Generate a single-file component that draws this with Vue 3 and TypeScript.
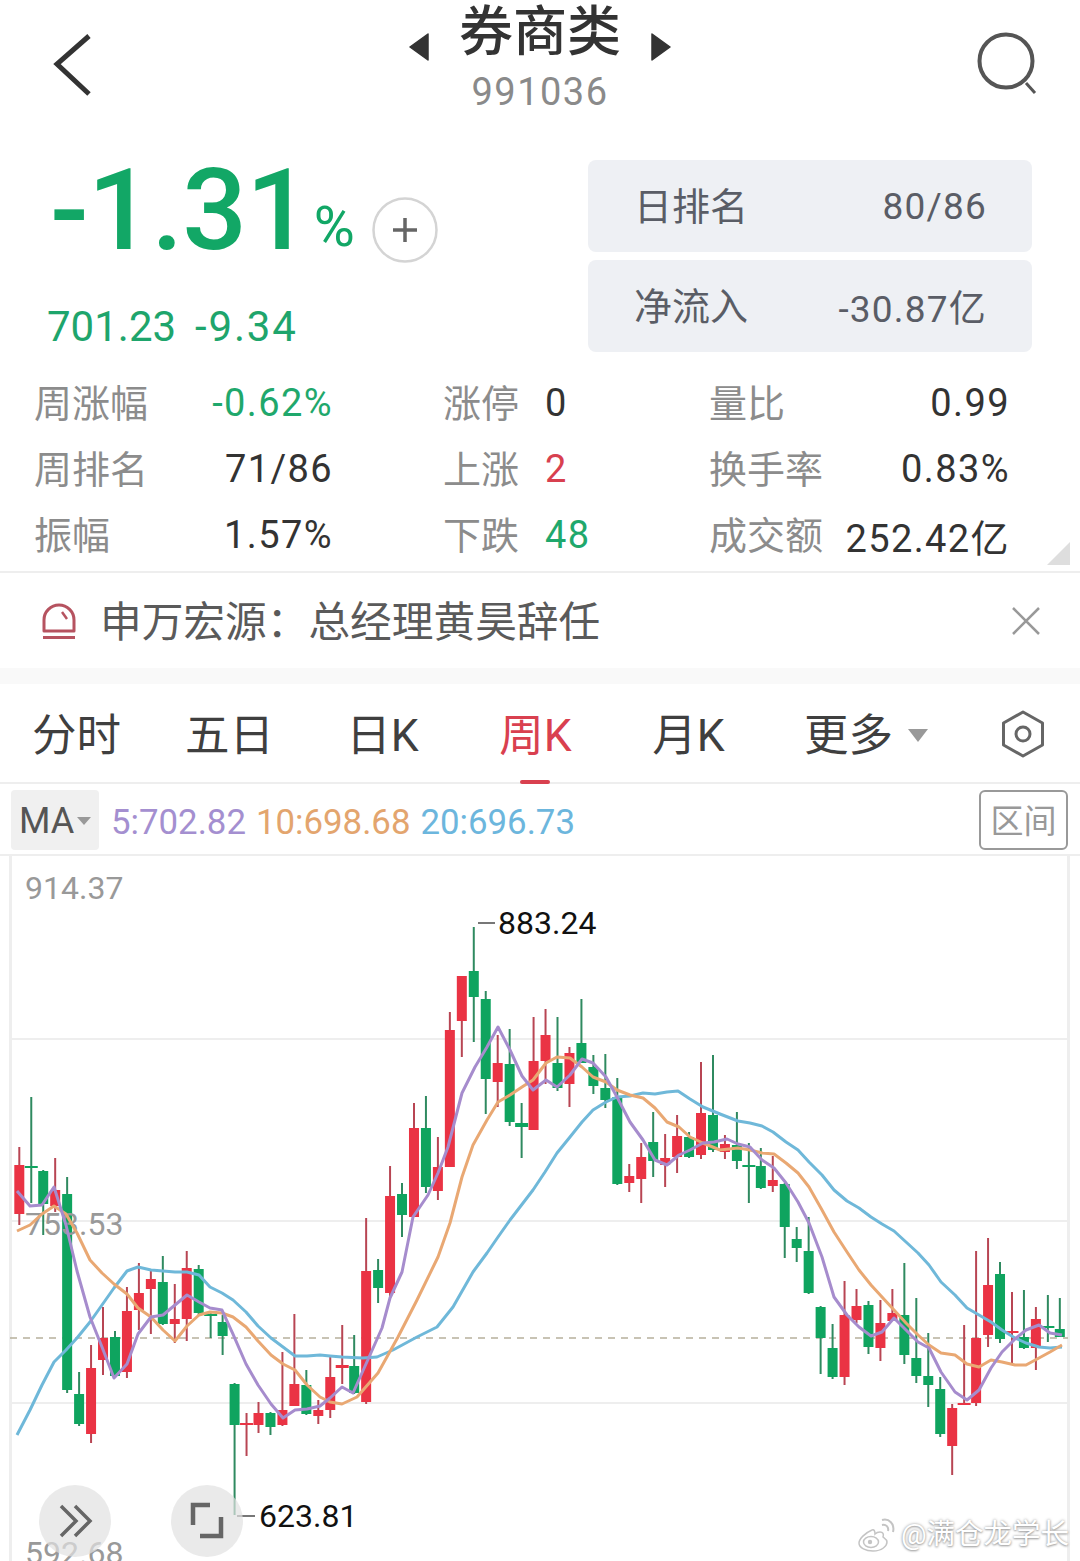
<script setup lang="ts">
interface Stat { label: string; value: string; tone?: string }

const columns: { cls: string; items: Stat[] }[] = [
  { cls: 'col-a', items: [
    { label: '周涨幅', value: '-0.62%', tone: 'green' },
    { label: '周排名', value: '71/86' },
    { label: '振幅', value: '1.57%' },
  ] },
  { cls: 'col-b', items: [
    { label: '涨停', value: '0' },
    { label: '上涨', value: '2', tone: 'red' },
    { label: '下跌', value: '48', tone: 'green' },
  ] },
  { cls: 'col-c', items: [
    { label: '量比', value: '0.99' },
    { label: '换手率', value: '0.83%' },
    { label: '成交额', value: '252.42亿' },
  ] },
]

const tabs = ['分时', '五日', '日K', '周K', '月K']

// up, high, body top, body bottom, low — in page pixels
const raw: [number, number, number, number, number][] = [
  [1,1147,1165,1214,1225],[0,1097,1166,1168,1203],[0,1170,1171,1204,1235],[1,1158,1190,1206,1212],
  [0,1177,1194,1390,1393],[0,1372,1394,1424,1426],[1,1345,1368,1434,1443],[1,1307,1338,1360,1375],
  [0,1331,1337,1376,1377],[1,1287,1311,1372,1378],[1,1263,1293,1310,1330],[1,1269,1279,1289,1334],
  [0,1256,1282,1324,1325],[1,1284,1319,1324,1343],[1,1251,1268,1319,1341],[0,1265,1269,1313,1316],
  [0,1311,1314,1316,1338],[0,1315,1322,1336,1355],[0,1383,1384,1425,1515],[1,1413,1423,1425,1456],
  [1,1402,1413,1425,1433],[0,1412,1413,1427,1435],[1,1352,1410,1425,1426],[1,1314,1384,1406,1406],
  [0,1370,1385,1414,1415],[1,1400,1410,1416,1424],[1,1357,1377,1410,1418],[1,1325,1365,1368,1384],
  [0,1335,1366,1393,1394],[1,1218,1271,1402,1404],[0,1259,1270,1288,1303],[1,1166,1196,1293,1297],
  [0,1183,1194,1215,1237],[1,1103,1128,1217,1217],[0,1096,1128,1187,1193],[1,1137,1167,1191,1200],
  [1,1012,1030,1167,1167],[1,976,976,1021,1057],[0,927,971,997,1042],[0,991,999,1079,1114],
  [1,1035,1063,1082,1107],[0,1029,1064,1122,1126],[0,1103,1123,1127,1158],[1,1017,1061,1130,1130],
  [1,1009,1035,1061,1084],[0,1017,1063,1088,1091],[1,1047,1053,1084,1107],[0,999,1043,1063,1063],
  [0,1055,1067,1086,1094],[0,1054,1088,1100,1108],[0,1078,1097,1184,1185],[1,1164,1176,1183,1192],
  [1,1143,1157,1179,1203],[0,1112,1142,1161,1177],[1,1134,1158,1165,1187],[1,1115,1136,1157,1173],
  [0,1132,1137,1157,1158],[1,1062,1113,1155,1159],[0,1055,1115,1150,1152],[1,1135,1144,1152,1159],
  [0,1112,1145,1161,1169],[0,1143,1165,1167,1203],[0,1148,1166,1188,1189],[1,1156,1180,1186,1192],
  [0,1183,1184,1227,1258],[0,1227,1239,1248,1262],[0,1217,1251,1293,1294],[0,1306,1307,1338,1374],
  [0,1324,1348,1377,1379],[1,1281,1315,1377,1385],[1,1289,1306,1320,1323],[0,1301,1305,1347,1354],
  [1,1300,1323,1348,1361],[1,1289,1313,1321,1321],[0,1263,1315,1355,1364],[0,1298,1358,1376,1383],
  [0,1333,1376,1385,1407],[0,1377,1389,1434,1437],[1,1404,1408,1446,1475],[1,1325,1403,1405,1405],
  [1,1251,1338,1403,1406],[1,1238,1285,1335,1347],[0,1262,1274,1339,1343],[1,1292,1331,1332,1363],
  [0,1290,1337,1348,1349],[1,1307,1319,1348,1370],[0,1295,1326,1328,1342],[0,1298,1329,1337,1337],
]

const candles = raw.map(([up, high, top, bottom, low], i) => {
  const body = bottom - top
  const thin = body <= 4 && low - high > 10
  const x = 19.3 + 11.96 * i
  return {
    x,
    up: up === 1,
    high,
    low,
    top,
    h: Math.max(body, 2),
    w: thin ? 13 : 10,
  }
})

const ma5 = '17,1191 30,1206 42,1205 54,1187 66,1225 77,1271 90,1317 102,1347 114,1378 127,1364 138,1334 151,1317 163,1315 175,1305 187,1295 199,1302 210,1308 222,1310 233,1334 246,1364 258,1385 271,1404 283,1418 295,1410 307,1409 320,1406 330,1398 342,1387 353,1393 370,1355 382,1328 390,1298 402,1272 413,1217 428,1195 438,1173 448,1147 462,1093 475,1067 487,1047 498,1027 510,1050 522,1076 533,1090 546,1080 557,1087 570,1075 582,1059 593,1063 606,1077 617,1097 630,1122 643,1140 655,1160 667,1165 679,1155 690,1150 703,1143 714,1142 727,1139 738,1144 750,1147 762,1160 774,1168 786,1183 798,1202 809,1223 822,1257 834,1297 847,1315 859,1327 871,1336 882,1332 894,1318 906,1330 918,1342 929,1348 941,1372 955,1392 967,1400 979,1390 991,1368 1002,1352 1015,1339 1026,1330 1039,1325 1050,1333 1062,1335'
const ma10 = '17,1231 30,1225 42,1214 54,1206 66,1214 77,1233 90,1260 102,1273 114,1284 127,1294 138,1308 151,1317 163,1330 175,1341 187,1326 199,1315 210,1312 222,1313 233,1317 246,1327 258,1341 271,1355 283,1364 295,1370 307,1385 320,1397 330,1402 342,1404 357,1397 378,1373 398,1337 417,1300 438,1257 450,1223 462,1177 473,1145 487,1120 498,1102 510,1095 522,1087 533,1080 546,1063 557,1057 570,1058 582,1067 593,1077 606,1082 617,1090 630,1095 643,1098 655,1108 667,1122 679,1127 690,1137 703,1143 720,1150 738,1148 750,1150 762,1153 774,1154 786,1163 798,1173 809,1187 822,1210 834,1232 847,1252 859,1270 871,1285 882,1297 894,1310 906,1323 918,1335 929,1345 941,1353 955,1355 967,1364 979,1367 991,1360 1002,1362 1015,1365 1026,1365 1039,1358 1050,1352 1062,1345'
const ma20 = '17,1435 30,1410 42,1385 54,1362 66,1350 77,1338 90,1322 102,1305 114,1288 127,1271 138,1267 151,1270 163,1271 175,1272 187,1272 199,1275 210,1287 222,1293 233,1300 246,1312 258,1326 271,1338 283,1347 295,1356 307,1356 320,1355 330,1356 342,1357 363,1358 377,1357 393,1350 417,1337 437,1327 453,1307 473,1272 487,1253 498,1237 510,1220 533,1190 545,1172 557,1153 570,1137 582,1122 593,1110 606,1102 617,1097 630,1096 643,1093 655,1094 667,1092 678,1091 690,1099 703,1107 720,1114 738,1121 750,1123 762,1126 773,1132 786,1142 798,1150 809,1162 822,1175 834,1190 847,1201 859,1208 871,1217 882,1224 894,1231 906,1242 918,1253 929,1265 941,1282 955,1295 967,1308 979,1315 991,1322 1002,1330 1015,1338 1026,1343 1039,1347 1050,1348 1062,1347'
</script>

<template>
  <div class="screen">
    <header class="nav">
      <svg class="back" width="46" height="70" viewBox="0 0 46 70">
        <path d="M38 6 L6 34 L38 64" fill="none" stroke="#333" stroke-width="5" />
      </svg>
      <div class="title-block">
        <div class="title-row">
          <svg class="tri" width="20" height="28" viewBox="0 0 20 28"><path d="M19 1 V27 L1 14 Z" fill="#333" stroke="#333" stroke-linejoin="round" stroke-width="1.5" /></svg>
          <h1 class="title">券商类</h1>
          <svg class="tri" width="20" height="28" viewBox="0 0 20 28"><path d="M1 1 V27 L19 14 Z" fill="#333" stroke="#333" stroke-linejoin="round" stroke-width="1.5" /></svg>
        </div>
        <div class="code">991036</div>
      </div>
      <svg class="search" width="62" height="64" viewBox="0 0 62 64">
        <circle cx="30" cy="30" r="26.5" fill="none" stroke="#555" stroke-width="4" />
        <path d="M50 52 L59 62" stroke="#555" stroke-width="3" fill="none" />
      </svg>
    </header>

    <section class="quote">
      <div class="quote-main">
        <div class="change">
          <span class="big">-1.31</span><span class="pct">%</span>
          <svg class="plus" width="66" height="66" viewBox="0 0 66 66">
            <circle cx="33" cy="33" r="31.5" fill="#fff" stroke="#d4d4d4" stroke-width="2.5" />
            <path d="M21 33 H45 M33 21 V45" stroke="#666" stroke-width="3.5" />
          </svg>
        </div>
        <div class="price"><span>701.23</span><span class="delta">-9.34</span></div>
      </div>
      <div class="badges">
        <div class="badge"><span class="badge-label">日排名</span><span class="badge-value">80/86</span></div>
        <div class="badge"><span class="badge-label">净流入</span><span class="badge-value">-30.87亿</span></div>
      </div>
    </section>

    <section class="stats">
      <div v-for="col in columns" :key="col.cls" class="stat-col" :class="col.cls">
        <div v-for="item in col.items" :key="item.label" class="stat">
          <span class="stat-label">{{ item.label }}</span>
          <span class="stat-value" :class="item.tone">{{ item.value }}</span>
        </div>
      </div>
      <i class="corner"></i>
    </section>

    <section class="notice">
      <svg class="alarm" width="38" height="38" viewBox="0 0 38 38">
        <path d="M4 29 V18 A15 15 0 0 1 34 18 V29 Z" fill="none" stroke="#b65360" stroke-width="3" stroke-linejoin="round" />
        <path d="M22 10 L27 17" stroke="#b65360" stroke-width="2.5" fill="none" />
        <path d="M3 35.5 H35" stroke="#b65360" stroke-width="3" />
      </svg>
      <span class="notice-text">申万宏源：总经理黄昊辞任</span>
      <svg class="close" width="30" height="30" viewBox="0 0 30 30">
        <path d="M2 2 L28 28 M28 2 L2 28" stroke="#999" stroke-width="2.5" />
      </svg>
    </section>

    <nav class="tabs">
      <span v-for="t in tabs" :key="t" class="tab" :class="{ active: t === '周K' }">{{ t }}</span>
      <span class="tab more">更多<i class="caret"></i></span>
      <svg class="hex" width="44" height="48" viewBox="0 0 44 48">
        <path d="M22 2 L41.5 13 V35 L22 46 L2.500 35 V13 Z" fill="none" stroke="#666" stroke-width="3" stroke-linejoin="round" />
        <circle cx="22" cy="24" r="7" fill="none" stroke="#666" stroke-width="3" />
      </svg>
    </nav>

    <div class="ma-row">
      <div class="ma-select">MA<i class="ma-caret"></i></div>
      <div class="ma-values">
        <span class="m5">5:702.82</span>
        <span class="m10">10:698.68</span>
        <span class="m20">20:696.73</span>
      </div>
      <div class="range">区间</div>
    </div>

    <div class="chart">
      <svg class="plot" width="1080" height="705" viewBox="0 856 1080 705">
        <g stroke="#eeeeee" stroke-width="2">
          <path d="M10 1039 H1068 M10 1221 H1068 M10 1403 H1068" fill="none" />
        </g>
        <path d="M10 1338 H1068" stroke="#b7b09c" stroke-width="1.500" stroke-dasharray="7 6" fill="none" />
        <g v-for="c in candles" :key="c.x">
          <line :x1="c.x" :x2="c.x" :y1="c.high" :y2="c.low" :stroke="c.up ? '#b84553' : '#2f8a60'" stroke-width="2" />
          <rect :x="c.x - c.w / 2" :y="c.top" :width="c.w" :height="c.h" :fill="c.up ? '#ea3344' : '#0fa45f'" />
        </g>
        <text x="25" y="899" class="axis">914.37</text>
        <text x="25" y="1235" class="axis">753.53</text>
        <text x="25" y="1564" class="axis">592.68</text>
        <polyline :points="ma20" class="ma" stroke="#6fb8d9" />
        <polyline :points="ma10" class="ma" stroke="#e9a873" />
        <polyline :points="ma5" class="ma" stroke="#a68ccd" />
        <path d="M478 923 H495" stroke="#777" stroke-width="2" />
        <text x="498" y="934" class="mark">883.24</text>
        <path d="M237 1516 H255" stroke="#777" stroke-width="2" />
        <text x="259" y="1527" class="mark">623.81</text>
      </svg>

      <button class="round-btn btn-a" type="button">
        <svg width="40" height="36" viewBox="0 0 40 36">
          <path d="M6 3 L21 18 L6 33 M20 3 L35 18 L20 33" fill="none" stroke="#666" stroke-width="3.500" />
        </svg>
      </button>
      <button class="round-btn btn-b" type="button">
        <svg width="40" height="40" viewBox="0 0 40 40">
          <path d="M23 4 H6 V24 M34 16 V35 H13" fill="none" stroke="#666" stroke-width="4.500" />
        </svg>
      </button>

      <div class="watermark">
        <svg width="38" height="34" viewBox="0 0 38 34">
          <path d="M14 12 C7 15 1 21 1 25 C1 30 8 33 15 33 C24 33 29 28 29 24 C29 21 26 20 25 19 C26 16 25 14 22 14 C20 14 18 15 17 16 C17 13 16 11 14 12 Z" fill="#fff" stroke="#c4c4c4" stroke-width="1.500" />
          <ellipse cx="13" cy="24" rx="7.500" ry="5.500" fill="#fff" stroke="#c4c4c4" stroke-width="1.500" />
          <circle cx="12" cy="24" r="2.200" fill="#c4c4c4" />
          <path d="M24 7 C28 6 31 9 30 13 M24 2 C31 0 37 6 35 14" fill="none" stroke="#c4c4c4" stroke-width="2" />
        </svg>
        <span>@满仓龙学长</span>
      </div>
    </div>
  </div>
</template>

<style scoped>
.screen {
  width: 1080px;
  height: 1561px;
  overflow: hidden;
  background: #fff;
  display: flex;
  flex-direction: column;
  font-family: Roboto, "Noto Sans CJK SC", sans-serif;
}
.nav {
  height: 125px;
  flex: none;
  padding: 0 42px 0 51px;
  box-sizing: border-box;
  display: grid;
  grid-template-columns: 1fr auto 1fr;
  align-items: start;
}
.back { margin-top: 30px; }
.search { margin-top: 31px; justify-self: end; }
.title-block {
  text-align: center;
  margin-right: 9px;
}
.title-row {
  height: 66px;
  display: flex;
  align-items: center;
  gap: 30px;
}
.tri { margin-top: 28px; }
.title {
  margin: 0;
  font-size: 54px;
  line-height: 66px;
  font-weight: 500;
  color: #333;
}
.code {
  font-size: 38px;
  line-height: 46px;
  letter-spacing: 1.500px;
  color: #8a8a8a;
  margin-top: 3px;
}
.quote {
  height: 245px;
  flex: none;
  display: flex;
  justify-content: space-between;
  padding: 35px 48px 0 50px;
  box-sizing: border-box;
}
.change {
  display: flex;
  align-items: flex-end;
  color: #12a766;
  height: 101px;
}
.big {
  font-size: 114px;
  line-height: 102px;
  font-weight: 500;
  letter-spacing: -1px;
}
.pct {
  font-size: 56px;
  line-height: 68px;
  margin-left: 4px;
}
.plus { margin: 0 0 -2px 17px; }
.price {
  margin: 41px 0 0 -3px;
  display: flex;
  gap: 19px;
  font-size: 42px;
  line-height: 50px;
  color: #1ea56c;
}
.delta { letter-spacing: 1.800px; }
.badges {
  width: 444px;
  display: flex;
  flex-direction: column;
  gap: 8px;
}
.badge {
  height: 92px;
  border-radius: 8px;
  background: #eef0f4;
  color: #5a5d66;
  display: flex;
  align-items: center;
  justify-content: space-between;
  padding: 0 45px 0 46px;
}
.badge-label {
  font-size: 38px;
  margin-bottom: 5px;
}
.badge-value {
  font-size: 37px;
  letter-spacing: 1.200px;
}
.stats {
  height: 203px;
  flex: none;
  display: flex;
  padding: 0 0 0 34px;
  box-sizing: border-box;
  border-bottom: 2px solid #eeeeee;
  position: relative;
}
.stat-col {
  display: flex;
  flex-direction: column;
}
.col-a { width: 299px; margin-right: 110px; }
.col-b { width: 266px; }
.col-c { width: 301px; }
.stat {
  height: 66px;
  display: flex;
  align-items: center;
  justify-content: space-between;
}
.col-b .stat { justify-content: flex-start; gap: 26px; }
.stat-label {
  font-size: 38px;
  color: #8c8c8c;
  margin-bottom: 6px;
}
.stat-value {
  font-size: 38px;
  letter-spacing: 1.400px;
  color: #333;
}
.green { color: #1fa86c; }
.red { color: #d8404f; }
.corner {
  position: absolute;
  right: 10px;
  bottom: 6px;
  width: 0;
  height: 0;
  border-left: 23px solid transparent;
  border-bottom: 23px solid #dedede;
}
.notice {
  height: 111px;
  flex: none;
  display: flex;
  align-items: center;
  padding: 0 39px 0 40px;
  box-sizing: border-box;
  border-bottom: 16px solid #f9f9f9;
}
.notice-text {
  flex: 1;
  margin-left: 22px;
  margin-bottom: 4px;
  font-size: 41.700px;
  color: #5a5a5a;
}
.tabs {
  height: 100px;
  flex: none;
  display: flex;
  align-items: center;
  border-bottom: 2px solid #eeeeee;
  box-sizing: border-box;
  position: relative;
}
.tab {
  width: 153px;
  margin-bottom: 3px;
  text-align: center;
  font-size: 44.500px;
  color: #3f3f3f;
  position: relative;
}
.tab.active { color: #d9404f; }
.tab.active::after {
  content: "";
  position: absolute;
  left: 61px;
  bottom: -20px;
  width: 30px;
  height: 4px;
  background: #d9404f;
  border-radius: 2px;
}
.more {
  margin-left: 39px;
  width: auto;
  display: flex;
  align-items: center;
}
.caret {
  display: block;
  width: 0;
  height: 0;
  margin: 7px 0 0 15px;
  border-left: 10px solid transparent;
  border-right: 10px solid transparent;
  border-top: 13px solid #999;
}
.hex {
  position: absolute;
  left: 1001px;
  top: 26px;
}
.ma-row {
  height: 72px;
  flex: none;
  display: flex;
  align-items: center;
  padding: 2px 12px 0 11px;
  box-sizing: border-box;
  border-bottom: 2px solid #eeeeee;
}
.ma-select {
  width: 88px;
  height: 60px;
  background: #f0f0f0;
  border-radius: 4px;
  display: flex;
  align-items: center;
  padding: 2px 0 0 8px;
  box-sizing: border-box;
  font-size: 36px;
  color: #555;
}
.ma-caret {
  margin-left: 3px;
  width: 0;
  height: 0;
  border-left: 7px solid transparent;
  border-right: 7px solid transparent;
  border-top: 8px solid #999;
}
.ma-values {
  flex: 1;
  display: flex;
  gap: 10px;
  margin-left: 12px;
  padding-top: 3px;
  font-size: 34.800px;
}
.m5 { color: #a48fd0; }
.m10 { color: #e3a56e; }
.m20 { color: #6cb6dd; }
.range {
  width: 89px;
  height: 60px;
  border: 2px solid #999;
  border-radius: 6px;
  box-sizing: border-box;
  display: flex;
  align-items: center;
  justify-content: center;
  padding-bottom: 3px;
  font-size: 33px;
  color: #999;
}
.chart {
  flex: 1;
  position: relative;
  box-sizing: border-box;
}
.plot {
  display: block;
  position: absolute;
  left: 0;
  top: 0;
  overflow: hidden;
}
.chart::before {
  content: "";
  position: absolute;
  left: 9px;
  top: 0;
  width: 1061px;
  bottom: 0;
  box-sizing: border-box;
  border: solid #eeeeee;
  border-width: 0 3px;
}
.axis {
  font-family: Roboto, sans-serif;
  font-size: 32px;
  fill: #999;
}
.mark {
  font-family: Roboto, sans-serif;
  font-size: 32px;
  fill: #111;
}
.ma {
  fill: none;
  stroke-width: 3;
  stroke-linejoin: round;
}
.round-btn {
  position: absolute;
  top: 629px;
  width: 72px;
  height: 72px;
  padding: 0;
  border: 0;
  border-radius: 50%;
  background: rgba(225, 225, 225, 0.7);
  display: flex;
  align-items: center;
  justify-content: center;
}
.btn-a { left: 39px; }
.btn-b { left: 171px; }
.watermark {
  position: absolute;
  left: 858px;
  top: 662px;
  display: flex;
  align-items: center;
  gap: 5px;
  font-size: 28.500px;
  line-height: 34px;
  color: #fff;
  text-shadow: 0 0 3px #999, 0 1px 2px #aaa;
}
</style>
